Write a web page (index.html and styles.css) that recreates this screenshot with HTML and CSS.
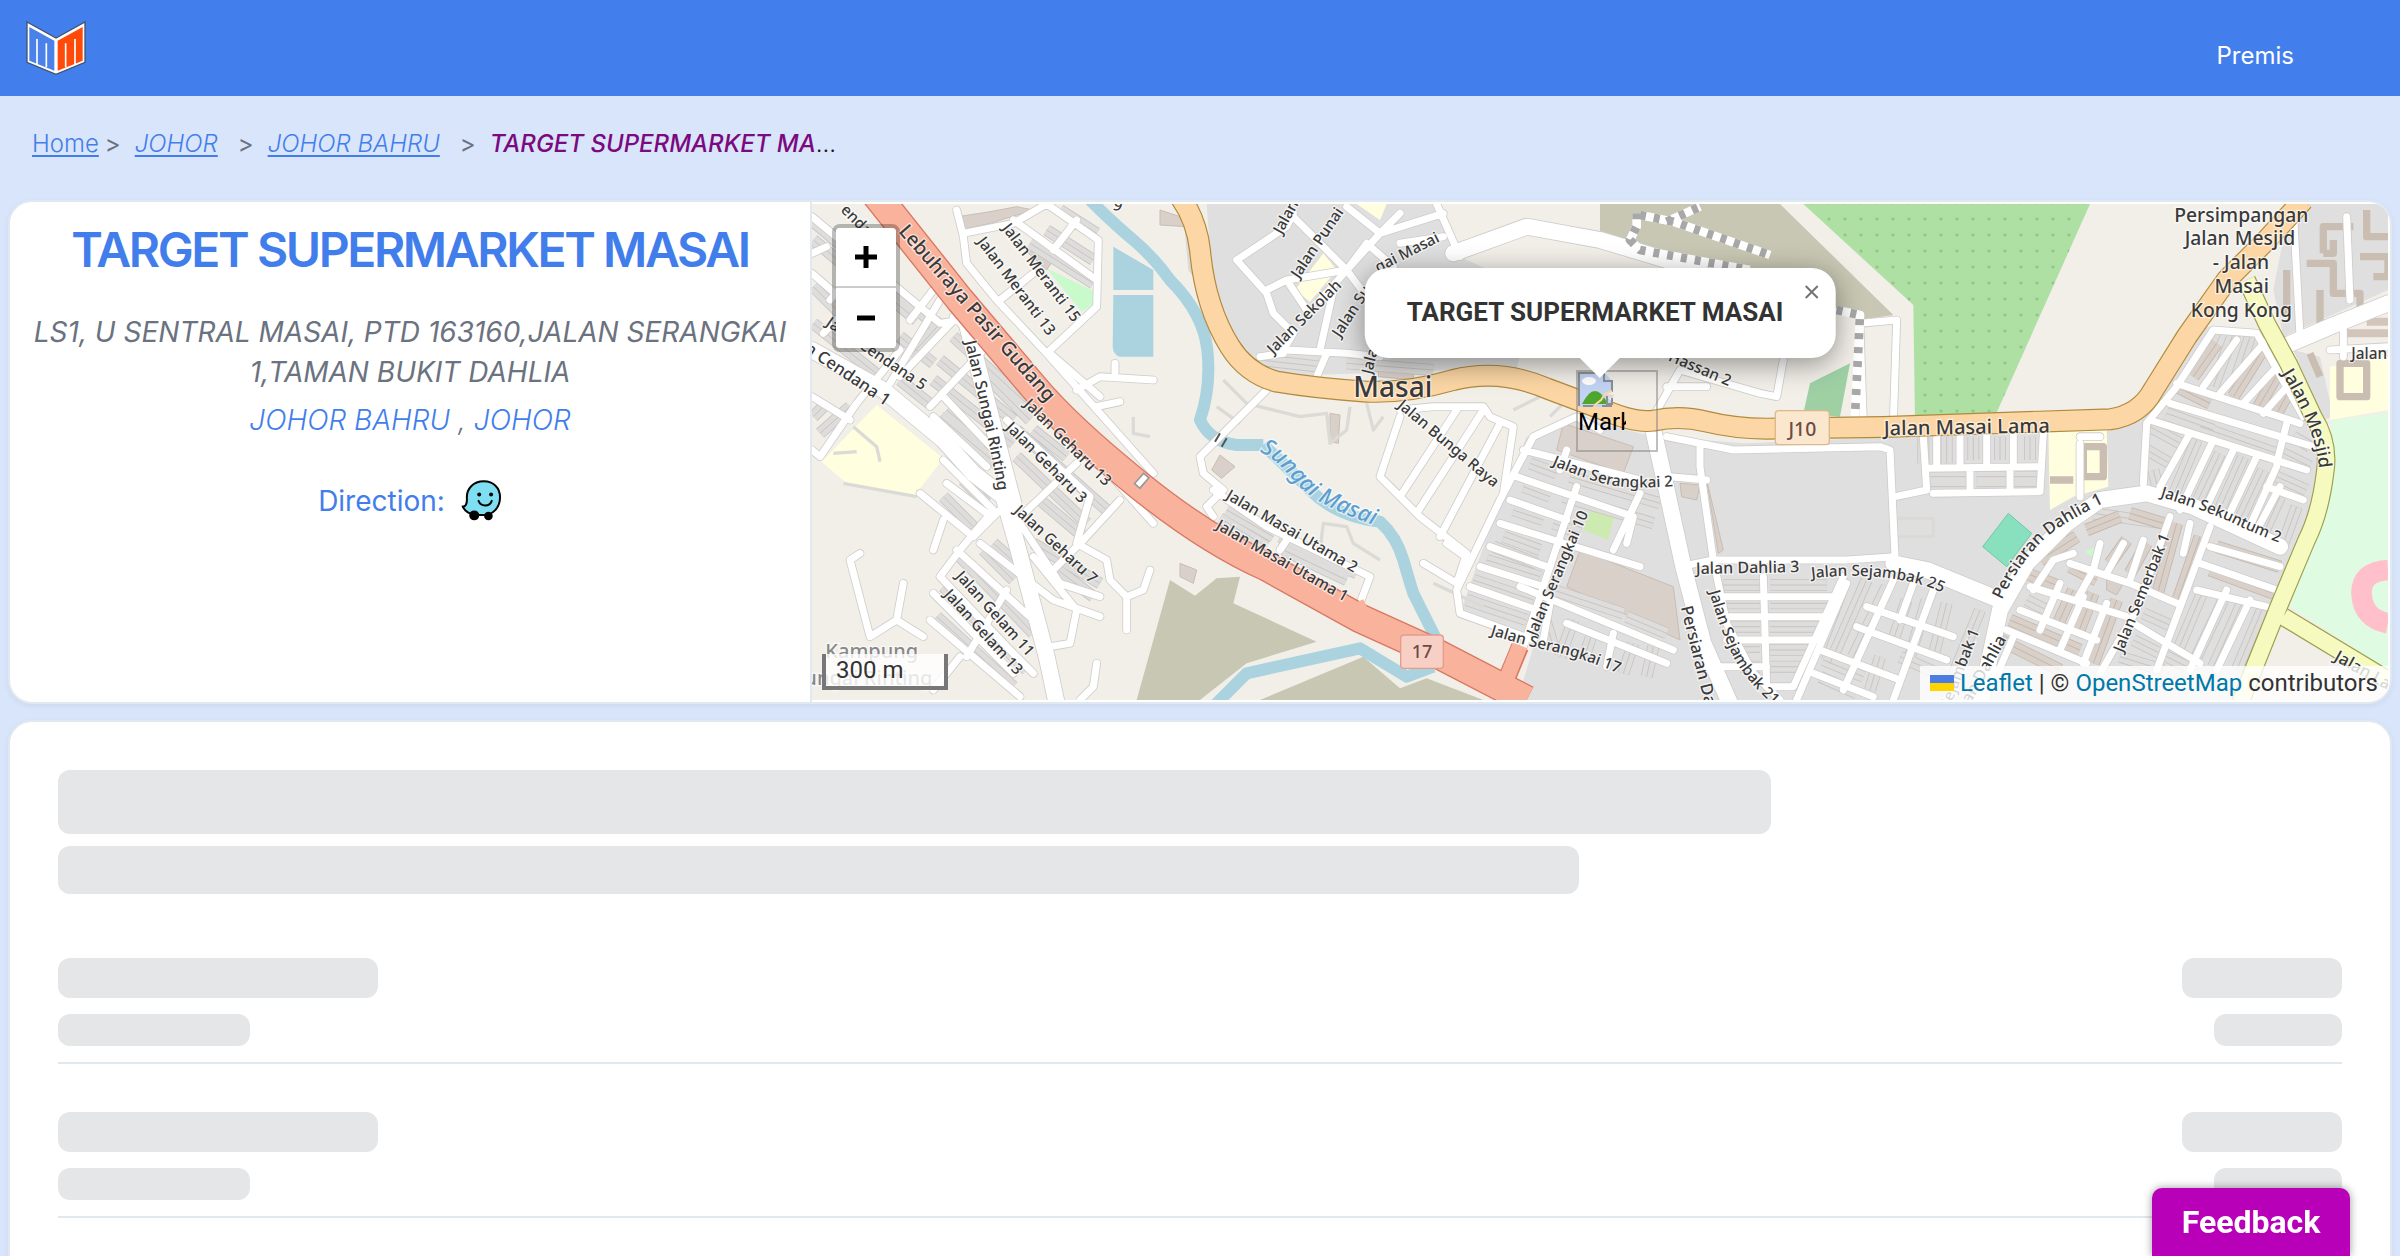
FILE: index.html
```html
<!DOCTYPE html>
<html lang="ms">
<head>
<meta charset="utf-8">
<meta name="viewport" content="width=device-width, initial-scale=1">
<title>TARGET SUPERMARKET MASAI</title>
<link rel="stylesheet" href="styles.css">
</head>
<body>
<header class="topbar">
  <a class="logo" href="#" aria-label="Home">
    <svg viewBox="48 28 180 162" width="60" height="54" aria-hidden="true">
      <path d="M51 31 138 79 225 31V152L138 188 51 152Z" fill="#fff" stroke="#44546f" stroke-width="4"/>
      <path d="M58 46 133 87V177L58 147Z" fill="#4a82ea"/>
      <path d="M143 87 218 46V147L143 177Z" fill="#ff4a0a"/>
      <path d="M81 157V82M109 167V95M167 167V95M195 157V82" fill="none" stroke="#fff" stroke-width="5"/>
    </svg>
  </a>
  <nav><a class="nav-link" href="#">Premis</a></nav>
</header>

<nav class="crumbs" aria-label="Breadcrumb">
  <a href="#">Home</a><span class="sep first">&gt;</span>
  <a href="#"><i>JOHOR</i></a><span class="sep">&gt;</span>
  <a href="#"><i>JOHOR BAHRU</i></a><span class="sep">&gt;</span>
  <span class="current"><em>TARGET SUPERMARKET MA</em>...</span>
</nav>

<main>
<section class="card premise">
  <div class="details">
    <h1>TARGET SUPERMARKET MASAI</h1>
    <address>
      <p class="street">LS1, U SENTRAL MASAI, PTD 163160,JALAN SERANGKAI 1,TAMAN BUKIT DAHLIA</p>
      <p class="area"><a href="#">JOHOR BAHRU</a> , <a href="#">JOHOR</a></p>
    </address>
    <p class="direction">Direction:
      <a href="#" aria-label="Waze">
        <svg viewBox="65 58 124 124" width="41" height="41">
          <path d="M83 116C80 84 103 62 134 62c29 0 49 20 49 48 0 32-22 54-50 54H106C88 160 76 151 70 138c9 1 13-8 13-22Z" fill="#7fdff2" stroke="#000" stroke-width="6" stroke-linejoin="round"/>
          <circle cx="105" cy="165" r="15"/><circle cx="148" cy="167" r="13"/>
          <circle cx="120" cy="102" r="6"/><circle cx="156" cy="102" r="6"/>
          <path d="M118 121c7 18 33 19 40 0" fill="none" stroke="#000" stroke-width="6" stroke-linecap="round"/>
        </svg>
      </a>
    </p>
  </div>

  <div class="map">
    <svg class="tiles" viewBox="36 42 4728 1488" preserveAspectRatio="xMidYMid slice" role="img" aria-label="Masai">
      <defs>
        <pattern id="trees" width="48" height="48" patternUnits="userSpaceOnUse" x="3062" y="62"><circle cx="25" cy="25" r="4" fill="#85c07c"/></pattern>
        <g id="rows">
          <path d="M40 95 400 400M40 150 150 240M180 250 350 390M40 290 220 470M300 440 400 520M40 400 240 560M300 570 400 650M420 510 640 690M400 570 640 760M460 440 680 640M330 500 430 390M40 680 80 640M60 730 150 650M420 680 600 830M440 660 560 760M650 720 920 960M650 800 860 1000M720 930 850 1040M560 560 690 690M700 640 960 860M700 1060 900 1180M760 1130 880 1220M580 1060 680 1150M550 1080 640 1170M480 1100 700 1330M430 1190 680 1440M410 1280 640 1490M430 920 520 1010M490 870 560 940M700 720 800 800M780 60 890 130M740 120 880 210M690 160 880 280"/>
          <path d="M1260 985 1400 1070M1280 960 1420 1040M1450 1080 1640 1170M1440 1040 1670 1150M1380 510 1560 530M1640 520 1900 540"/>
          <path d="M2190 820 2270 850M2310 860 2580 940M2170 890 2250 920M2290 920 2560 1000M2140 960 2230 990M2260 1000 2340 1030M2110 1040 2220 1080M2080 1070 2210 1120M2060 1110 2220 1160M2020 1170 2200 1230M2000 1230 2180 1290M2230 1270 2260 1370M2320 1290 2280 1400M2380 1320 2350 1410M2500 1360 2470 1450M2560 1370 2540 1460M2480 1280 2600 1330M2260 1200 2470 1270"/>
          <path d="M2770 1185 2880 1185M2910 1185 3080 1185M2770 1240 2880 1240M2910 1240 3080 1240M2780 1310 2880 1310M2910 1310 3060 1310M2800 1370 2880 1370M2910 1380 3030 1380M2820 1430 2880 1430M2910 1430 3010 1430M3200 1170 3090 1420M3130 1190 3050 1400M3260 1190 3160 1400M3320 1230 3280 1350M3380 1230 3330 1400M3440 1240 3400 1400M3240 1400 3210 1500M3070 1410 3190 1460M3060 1460 3170 1510M3300 1400 3480 1480M3540 1260 3450 1480"/>
          <path d="M3370 740V820M3440 740V820M3520 740V810M3600 740V810M3690 740V810M3380 860H3500M3380 890H3500M3530 860H3620M3530 890H3620M3640 860H3720M3640 890H3720"/>
          <path d="M4100 670 4240 720M4090 690 4410 800M4200 710 4430 790M4050 710 4140 760M4040 780 4110 820M4480 740 4530 770M4450 790 4530 830M4430 860 4520 900M4060 840 4070 880M4190 750 4110 940M4260 790 4180 960M4330 800 4250 980M4390 840 4310 1010M4440 920 4390 1030M4490 950 4450 1060M4250 420 4190 550M4300 430 4240 590M4350 440 4290 620"/>
          <path d="M4210 1200 4130 1390M4270 1230 4190 1400M4330 1230 4240 1430M4390 1250 4310 1440M4000 1350 4160 1430M3960 1400 4090 1440M3680 1230 3740 1260M4030 1270 4120 1310M3880 970 4090 1000"/>
        </g>
        <g id="shops">
          <path d="M4250 460 4180 560M4400 460 4300 620M4440 540 4370 660M4480 580 4430 670M4130 590 4230 640M3680 1150 3780 1190M3820 1200 3770 1310M3880 1210 3830 1340M3950 1230 3880 1420M3630 1290 3840 1380M3600 1350 3780 1440M3980 1050 3930 1120M4040 1060 3990 1150M4130 1000 4070 1220M4200 1040 4130 1240M4250 1070 4440 1130M4230 1140 4420 1210M3810 1130 3890 1170M3720 1110 3830 1040M3860 1020 3960 980M3990 970 4090 1000"/>
        </g>
        <g id="lanes">
          <path d="M36 80 420 400 480 390M36 250 300 480 170 640 60 800 36 780M160 340 70 430M240 160 90 330M36 190 80 170M300 560 480 370M36 620 150 690M420 330 270 580M390 650 550 480M400 300 330 390"/>
          <path d="M470 60 490 140 500 220 590 330 740 490 890 350 895 150 740 42M490 130 640 100 740 42M600 330 700 250M640 90 890 270M760 180 830 90M750 490 900 620"/>
          <path d="M830 600 900 560 1060 570M945 520V560M890 650 960 635M740 490 1060 850M460 380 700 600 830 740 1060 1000M620 690 870 920 830 1060 920 1110 930 1170 980 1220 980 1320M980 1220 1030 1200 1050 1140M830 820 640 1000M960 930 850 1050"/>
          <path d="M430 620 620 820M400 680 560 830M360 910 520 1040 610 950M430 810 580 960 480 1080 420 1160 640 1390 700 1450M470 1080 700 1290M540 1060 760 1230 900 1280M660 1000 780 1180 900 1220M700 1100 830 1260 810 1360 750 1370M400 1210 640 1450M390 1290 660 1520M440 880 560 970M430 990 400 1080M180 1090 150 1110 210 1340 290 1290 370 1340M310 1180 290 1290M480 1400 400 1500M620 1200 500 1400M850 1050 750 1150M890 1420 880 1490 840 1530"/>
          <path d="M1400 600 1200 800 1210 850 1270 900 1220 950 1240 980M1240 900 1400 1010 1710 1160 1680 1240M1440 1080 1460 1050"/>
          <path d="M1480 80 1640 240 1760 400M1480 70 1460 110 1310 210 1400 310 1420 370 1480 430 1450 480M1400 300 1460 270 1520 360M1640 240 1460 270M1380 500 1450 490M1640 50 1740 130 1560 330M1460 480 1640 490 1740 500M1580 490 1550 560M1740 130 1800 70M1700 160 1780 230M1740 130 1930 70M1640 240 1700 160M1910 42 1980 200M1930 140 1800 160M1600 300 1560 480"/>
          <path d="M1800 660 1900 650 2050 650 2070 680 2140 710 2110 910M1800 680 1740 860 1860 980 2000 1090 1970 1180 1870 1120M1970 660 1800 920M2050 660 1850 970M2100 700 1920 1040M1940 1060 2010 1110"/>
          <path d="M2400 720 2330 680 2200 740 2100 930 1970 1200 1980 1270 2200 1350M2170 780 2520 870M2150 860 2500 980 2480 1060M2130 930 2300 990M2100 1000 2260 1050 2520 1130M2070 1070 2240 1130M2040 1130 2230 1190M2010 1190 2210 1260M2300 780 2280 840M2330 890 2160 1400M2520 910 2440 1080M2160 1190 2620 1380M2250 1240 2230 1350M2300 1300 2600 1420M2440 1330 2420 1430"/>
          <path d="M2600 740 2800 780 3240 770 3270 780 3285 1100 3140 1110 2740 1110 2640 1130M2700 760 2700 830 2740 1110M2610 860 2720 870M2740 1110 2780 1300 2860 1450 2940 1530M2760 1220H3100M2770 1280H3080M2780 1350H3060M2890 1160 2900 1490 2980 1490 3130 1160M3140 1180 2990 1530M3280 1170 3130 1500M3060 1380 3300 1470M3170 1310 3440 1410M3200 1250 3460 1340M3400 1200 3280 1530M3340 1180 3300 1290M3040 1450 3220 1520M2720 1430H2900"/>
          <path d="M3285 920 3380 900 3370 740M3400 910 3720 905 3730 730M3380 835 3720 830M3410 730V830M3480 730V830M3560 730V820M3640 730V820M3510 840V900M3630 840V900"/>
          <path d="M4030 880 4040 700 4130 590 4240 420 4370 430 4510 680M4130 580 4500 700M4110 640 4540 770M4050 690 4520 840M4170 730 4080 890M4240 750 4140 960M4300 780 4210 970M4370 800 4280 990M4430 830 4340 1030M4460 700 4430 820M4440 890 4360 1040M4400 890 4510 930M4310 450 4210 590M4400 450 4260 610M4440 520 4330 640M4470 580 4390 670"/>
          <path d="M4480 60 4500 440M4640 80 4650 330M4590 480 4764 470M4630 420V500M3840 760V920M3840 740H3900"/>
          <path d="M4110 980 4010 1260 3900 1450M4230 1010 4070 1440M4170 1000 4150 1090M4230 1070 4440 1130M4200 1120 4430 1200M4190 1200 4400 1250M3820 1090 3760 1110 3700 1200M3900 1060 3880 1140 3830 1230M3690 1190 3980 1280M3660 1260 3890 1350M3620 1320 3860 1420M3780 1180 3720 1320M3850 1220 3780 1380M3920 1240 3850 1420M4000 1300 4200 1420M4280 1200 4170 1440M4350 1230 4250 1440M3810 1120 3990 1180 4130 1240M3970 1060 3920 1150M4030 1050 3990 1170M3580 1480 3640 1340"/>
        </g>
        <g id="mains">
          <path d="M36 480 250 600 430 750 520 850 610 920 650 1060 740 1400 770 1540"/>
          <path d="M500 400 640 940"/>
          <path d="M2560 720 2600 900 2650 1130 2710 1360 2790 1540"/>
          <path d="M3540 1540 3600 1260 3680 1120 3800 1000 3900 930 4040 910 4180 950 4440 1070"/>
          <path d="M3280 1120 3380 1140 3600 1230"/>
          <path d="M4450 470 4590 410 4764 340"/>
          <path d="M1960 190 2180 110 2400 150 2700 240"/>
        </g>
        <path id="river" d="M870 30Q940 100 1000 150T1110 270Q1210 370 1222 480T1200 690Q1230 755 1310 765H1390M1390 765Q1450 820 1530 900T1740 995Q1790 1040 1810 1110T1840 1210L1905 1340M1200 1590 1340 1450 1680 1375 1820 1460 1900 1430"/>
        <path id="trunk" d="M225 10 480 330 700 590Q800 710 1010 880T1400 1130L1680 1285 1900 1385 2180 1530"/>
        <path id="jten" d="M1140 20Q1190 90 1200 180 1215 350 1290 470 1340 550 1430 575 1550 595 1700 605 1820 610 1960 570 2100 535 2240 595L2400 655Q2500 700 2560 692 2640 675 2720 695 2800 715 2900 716L3250 711 3660 697 3930 688Q4020 675 4060 600L4160 440 4280 270 4400 150 4510 30"/>
        <path id="mesjid" d="M4340 270 4400 400 4465 520 4540 680Q4590 760 4575 850 4560 970 4520 1050L4440 1240 4360 1440 4320 1540M4450 1280 4764 1470"/>
        <path id="t-river" d="M1378 785C1450 815 1480 890 1550 930S1680 990 1760 1020"/>
        <path id="t-mesjid" d="M4445 550Q4500 640 4530 720T4560 880"/>
        <path id="t-sekuntum" d="M4080 920Q4240 970 4300 1000T4470 1070"/>
        <path id="t-persiaran" d="M3605 1230Q3660 1120 3720 1060T3930 930"/>
        <path id="t-sera2" d="M2255 825Q2360 870 2430 885T2660 885"/>
        <path id="t-sera17" d="M2070 1335Q2170 1365 2260 1385T2480 1460"/>
        <path id="t-sejam25" d="M3035 1165Q3160 1150 3270 1165T3440 1215"/>
        <path id="t-sejam21" d="M2728 1205Q2760 1320 2800 1400T2960 1580"/>
        <path id="t-rinting" d="M495 455Q530 600 560 730T600 960"/>
        <path id="t-utama1" d="M1245 1015 1660 1250"/>
      </defs>

      <rect x="-400" y="-400" width="5600" height="2400" fill="#f2efe9"/>
      <g fill="#e0dfdf">
        <path d="M1220 42H1900L1980 200 2200 300 2150 540H1950L1400 560 1300 470 1240 330Z"/>
        <path d="M2180 740 2330 680 2560 740 2840 760 3740 720 3920 715 4020 690 4080 600 4220 410 4390 420 4560 690 4580 850 4520 1050 4330 1540H2150L2200 1370 1980 1270 2100 930Z"/>
        <path d="M4470 42H4764V300L4450 440 4420 300ZM4480 480 4560 500 4600 680 4570 690Z"/>
      </g>
      <path d="M1110 1170 1185 1217 1250 1165 1320 1160 1300 1240 1550 1355 1340 1420 1200 1530H1010ZM1380 1530 1690 1400 1800 1495 1880 1465 2050 1530ZM2400 42H2940L3280 375 3180 390 2900 250 2400 140Z" fill="#c8c7b3"/>
      <path d="M3010 42 3340 345 3345 690 3580 690 3870 42Z" fill="#aedfa3"/>
      <path d="M3010 42 3340 345 3345 690 3580 690 3870 42Z" fill="url(#trees)"/>
      <path d="M230 645 430 805 345 915 140 880 65 815ZM1570 190 1610 240 1530 335 1485 300ZM1670 42H1760L1740 90ZM3745 720H3920L3925 890 3820 920 3750 960ZM4590 530 4764 500V660L4590 690Z" fill="#ffffdf"/>
      <path d="M740 235 885 305V340L845 365Z" fill="#c8facc"/>
      <path d="M3030 580 3150 520 3120 680 3010 670Z" fill="#9fd0a4"/>
      <path d="M2380 940 2445 965 2425 1050 2350 1020Z" fill="#cdebb0"/>
      <path d="M3855 1085 3910 1060 3890 1110Z" fill="#c8facc"/>
      <path d="M4595 690 4764 670V1440L4470 1250 4580 900Z" fill="#dffce2"/>
      <path d="M4764 1140Q4680 1145 4685 1215T4764 1300" fill="none" stroke="#ffc0cb" stroke-width="62"/>
      <path d="M3548 1070 3625 970 3695 1030 3620 1130Z" fill="#88e0be" stroke="#6fc9a5" stroke-width="3"/>
      <path d="M475 80 570 65 650 50 700 60 570 100 480 120ZM690 170 760 210 740 240 680 185ZM1080 60 1140 80 1160 110 1080 105ZM1735 530 1840 535V570L1735 560ZM1590 670 1620 675 1615 760 1590 755ZM1260 795 1305 830 1265 865 1235 840ZM2290 700 2500 770 2470 850 2270 780ZM2340 1080 2620 1190 2640 1350 2300 1190ZM2640 880 2700 885 2690 930 2645 920ZM2720 870 2770 1080 2755 1090ZM3920 1160 3970 1180 3950 1215 3920 1200ZM1140 1120 1190 1140 1180 1180 1140 1160Z" fill="#d9d0c9" stroke="#c9bdb3" stroke-width="3"/>
      <path d="M4570 190V110H4660M4570 190H4600V150M4520 220H4600V310H4680V360M4700 60V140H4764M4680 200H4764V260H4720M4560 300V400H4600M4460 240V380M4620 520H4700V620H4620ZM4530 490 4560 560M3850 770H3910V860H3850ZM3750 870H3820" fill="none" stroke="#cabdb1" stroke-width="22"/>
      <path d="M4620 430H4764M4700 395H4764" stroke="#d3c5bb" stroke-width="24"/>

      <use href="#rows" class="row-edge"/><use href="#rows" class="row-fill"/><use href="#rows" class="row-edge thin"/>
      <use href="#shops" class="shop-edge"/><use href="#shops" class="shop-fill"/><use href="#shops" class="shop-edge thin"/>

      <path d="M3080 790 3240 785Q3255 785 3258 800L3270 1085 2980 1100 2790 1090 2740 790Z" fill="#e0dfdf"/>
      <use href="#river" class="river"/>
      <path d="M940 170 1060 240V300H940ZM940 315H1060V500H960Q940 495 938 470Z" fill="#aad3df"/>

      <path class="path" d="M160 710 230 770 240 815M100 790 170 785M130 880 350 920M1270 570 1340 640 1500 680 1580 670 1590 760 1640 720 1650 650M1700 640 1720 720 1750 680M1250 650 1320 700M1560 1080 1570 1000 1640 1010 1660 1060 1740 1110M1000 680V730L1050 740M1160 130 1170 240 1240 330M3290 985H3400V1040H3290M2250 680 2330 600 2440 620M2140 660 2260 600M1900 1180 2050 1250"/>
      <use href="#lanes" class="lane-edge"/><use href="#mains" class="main-edge"/>
      <use href="#lanes" class="lane-fill"/><use href="#mains" class="main-fill"/>
      <path class="lane-edge" d="M2560 680 2640 540M2600 590 2720 590M2640 540 2880 610 2930 620 2950 510M3180 400 3290 390 3280 700M3180 410 3190 700"/>
      <path class="lane-fill" d="M2560 680 2640 540M2600 590 2720 590M2640 540 2880 610 2930 620 2950 510M3180 400 3290 390 3280 700M3180 410 3190 700"/>
      <path d="M2510 70V110L2490 150 2520 180 2850 240M2520 75 2620 95 2910 195M2600 95 2700 50M3110 360 3180 375 3165 680" class="track-edge"/>
      <path d="M2510 70V110L2490 150 2520 180 2850 240M2520 75 2620 95 2910 195M2600 95 2700 50M3110 360 3180 375 3165 680" class="track-fill"/>

      <use href="#mesjid" class="yellow-edge"/><use href="#mesjid" class="yellow-fill"/>
      <path d="M2160 1370 2110 1490" class="trunk-edge slim"/>
      <use href="#trunk" class="trunk-edge"/>
      <path d="M2160 1366 2110 1490" class="trunk-fill slim"/><path d="M1690 1228 1716 1285 1640 1250Z" fill="#f9b29c"/>
      <use href="#trunk" class="trunk-fill"/>
      <use href="#jten" class="orange-edge"/><use href="#jten" class="orange-fill"/>
      <path d="M1010 890 1040 855" stroke="#999" stroke-width="26"/><path d="M1013 886 1037 859" stroke="#fff" stroke-width="16"/>
      <path d="M1245 755 1260 730M1265 770 1280 745" stroke="#555" stroke-width="6"/>

      <g class="shield">
        <rect x="1802" y="1335" width="128" height="100" rx="10" fill="#f8cfc4" stroke="#e39c8c" stroke-width="4"/>
        <text x="1866" y="1405" font-size="54" text-anchor="middle">17</text>
        <rect x="2926" y="662" width="162" height="102" rx="10" fill="#fbe6ce" stroke="#dcb98c" stroke-width="4"/>
        <text x="3007" y="738" font-size="58" text-anchor="middle">J10</text>
      </g>

      <g class="labels" font-size="46">
        <text transform="translate(294 125) rotate(49)" font-size="58">Lebuhraya Pasir Gudang</text>
        <text transform="translate(120 62) rotate(45)">endana 9</text>
        <text transform="translate(605 115) rotate(53)">Jalan Meranti 15</text>
        <text transform="translate(530 155) rotate(53)">Jalan Meranti 13</text>
        <text transform="translate(75 405) rotate(34)">Jalan Cendana 5</text>
        <text transform="translate(-60 435) rotate(34)" font-size="50">Jalan Cendana 1</text>
        <text font-size="48"><textPath href="#t-rinting">Jalan Sungai Rinting</textPath></text>
        <text transform="translate(670 645) rotate(45)">Jalan Geharu 13</text>
        <text transform="translate(615 715) rotate(45)">Jalan Geharu 3</text>
        <text transform="translate(640 965) rotate(43)">Jalan Geharu 7</text>
        <text transform="translate(465 1160) rotate(48)">Jalan Gelam 11</text>
        <text transform="translate(430 1215) rotate(48)">Jalan Gelam 13</text>
        <text x="76" y="1404" font-size="60" class="faint">Kampung</text>
        <text x="-20" y="1486" font-size="60" class="faint">Sungai Rinting</text>
        <text x="936" y="58" font-size="46" transform="rotate(18 936 58)">9</text>
        <text transform="translate(1445 135) rotate(-61)">Jalan</text>
        <text transform="translate(1496 268) rotate(-56)">Jalan Punai</text>
        <text transform="translate(1420 495) rotate(-45)">Jalan Sekolah</text>
        <text transform="translate(1620 445) rotate(-57)">Jalan Su</text>
        <text transform="translate(1735 248) rotate(-27)">gai Masai</text>
        <text transform="translate(1715 555) rotate(-76)">Jalan</text>
        <text x="1660" y="622" font-size="84">Masai</text>
        <text transform="translate(1790 650) rotate(40)">Jalan Bunga Raya</text>
        <text class="water" font-size="68"><textPath href="#t-river">Sungai Masai</textPath></text>
        <text transform="translate(1275 925) rotate(30)">Jalan Masai Utama 2</text>
        <text><textPath href="#t-utama1">Jalan Masai Utama 1</textPath></text>
        <text><textPath href="#t-sera2">Jalan Serangkai 2</textPath></text>
        <text transform="translate(2208 1340) rotate(-67)">Jalan Serangkai 10</text>
        <text><textPath href="#t-sera17">Jalan Serangkai 17</textPath></text>
        <text transform="translate(2530 480) rotate(23)">Jln. Hassan 2</text>
        <text transform="translate(3252 736) rotate(-1)" font-size="60">Jalan Masai Lama</text>
        <text x="2688" y="1152" font-size="48" transform="rotate(-1 2688 1152)">Jalan Dahlia 3</text>
        <text><textPath href="#t-sejam25">Jalan Sejambak 25</textPath></text>
        <text><textPath href="#t-sejam21">Jalan Sejambak 21</textPath></text>
        <text transform="translate(2642 1252) rotate(76)" font-size="50">Persiaran Dahlia</text>
        <text font-size="50"><textPath href="#t-persiaran">Persiaran Dahlia 1</textPath></text>
        <text transform="translate(3405 1670) rotate(-69)">Jalan Sejambak 1</text>
        <text transform="translate(3430 1690) rotate(-61)" font-size="50">Persiaran Dahlia</text>
        <text transform="translate(3968 1390) rotate(-68)">Jalan Semerbak 1</text>
        <text><textPath href="#t-sekuntum">Jalan Sekuntum 2</textPath></text>
        <text font-size="54"><textPath href="#t-mesjid">Jalan Mesjid</textPath></text>
        <text x="4654" y="506">Jalan Mesjid</text>
        <text transform="translate(4600 1410) rotate(29)" font-size="50">Jalan Lama</text>
        <g font-size="58" text-anchor="middle">
          <text x="4324" y="95">Persimpangan</text>
          <text x="4320" y="166">Jalan Mesjid</text>
          <text x="4323" y="238">- Jalan</text>
          <text x="4325" y="309">Masai</text>
          <text x="4324" y="381">Kong Kong</text>
        </g>
      </g>
    </svg>

    <div class="marker" role="img" aria-label="Marker">
      <svg viewBox="0 0 36 36" width="36" height="36" aria-hidden="true">
        <path d="M1 1H27L34 9V18L28 23 34 30V35H1Z" fill="#c3d3f4"/>
        <ellipse cx="11" cy="9" rx="7" ry="4" fill="#fff"/>
        <path d="M4 32Q17 6 30 32Z" fill="#4ea72c"/>
        <path d="M1 34V1H26V9H34V20M29 24V32H34V26M24 34H34M5 34H16" fill="none" stroke="#8a8f94" stroke-width="2"/>
        <path d="M34 19 27 22 23 28 18 32 15 36" fill="none" stroke="#fcd6a4" stroke-width="2"/>
      </svg>
      <span>Mark</span>
    </div>

    <div class="popup">
      <strong>TARGET SUPERMARKET MASAI</strong>
      <button class="close" type="button" aria-label="Close popup"><svg viewBox="0 0 14 14" width="14" height="14"><path d="M1 1 13 13M13 1 1 13" stroke="#757575" stroke-width="2"/></svg></button>
    </div>

    <div class="zoom">
      <button type="button" aria-label="Zoom in"><svg viewBox="0 0 22 22" width="22" height="22"><path d="M11 0V22M0 11H22" stroke="#000" stroke-width="5"/></svg></button>
      <button type="button" aria-label="Zoom out"><svg viewBox="0 0 22 22" width="22" height="22"><path d="M2 11H20" stroke="#000" stroke-width="5"/></svg></button>
    </div>
    <div class="scale">300 m</div>
    <div class="credit">
      <svg viewBox="0 0 24 16" width="24" height="16" aria-hidden="true"><path fill="#4c7be1" d="M0 0h24v8H0z"/><path fill="#ffd500" d="M0 8h24v8H0z"/></svg>
      <span><a href="#">Leaflet</a> | © <a href="#">OpenStreetMap</a> contributors</span>
    </div>
  </div>
</section>

<section class="card loading" aria-busy="true">
  <div class="bone heading"></div>
  <div class="bone subheading"></div>
  <ul>
    <li><div class="bone name"></div><div class="bone price"></div><div class="bone unit"></div><div class="bone date"></div></li>
    <li><div class="bone name"></div><div class="bone price"></div><div class="bone unit"></div><div class="bone date"></div></li>
    <li><div class="bone name"></div><div class="bone price"></div><div class="bone unit"></div><div class="bone date"></div></li>
  </ul>
</section>
</main>
<button class="feedback" type="button">Feedback</button>
</body>
</html>
```
FILE: styles.css
```css
* { box-sizing: border-box; }

body {
  margin: 0;
  background: #d9e5fb;
  color: #111827;
  font: 24px/32px Inter, "Liberation Sans", sans-serif;
}

h1, p, ul { margin: 0; padding: 0; }
a { color: #427eeb; text-decoration: none; }
button { font: inherit; border: 0; padding: 0; cursor: pointer; }
svg { display: block; }

.topbar {
  display: flex;
  justify-content: space-between;
  align-items: center;
  height: 96px;
  padding: 0 106px 0 26px;
  background: #427eec;
}
.nav-link { display: block; padding-top: 16px; color: #fff; }

.crumbs {
  display: flex;
  align-items: center;
  height: 96px;
  padding: 0 32px;
  font-weight: 300;
}
.crumbs a { text-decoration: underline; text-decoration-thickness: 2px; text-underline-offset: 3px; }
.sep { margin: 0 14px 0 20px; color: #6b7280; font-weight: 400; }
.sep.first { margin-left: 6px; }
.current em { color: #7a0a7e; font-weight: 500; }

main { display: flex; flex-direction: column; gap: 16px; padding: 8px; }

.card {
  background: #fff;
  border: 2px solid #e0e8f0;
  border-radius: 24px;
  box-shadow: 0 2px 6px rgba(0, 0, 0, .06);
}

.premise { display: grid; grid-template-columns: 401fr 789fr; overflow: hidden; }
.details {
  padding: 18px 20px;
  border-right: 2px solid #e0e8f0;
  text-align: center;
  font-size: 28px;
  line-height: 40px;
}
.details h1 { color: #427eeb; font-size: 48px; line-height: 60px; font-weight: 600; letter-spacing: -0.05em; }
address { margin-top: 32px; color: #6b7280; font-weight: 300; }
.street { font-weight: 400; }
.area { margin-top: 8px; }
.direction {
  display: flex;
  justify-content: center;
  align-items: center;
  gap: 16px;
  margin-top: 40px;
  color: #427eeb;
}

.map { position: relative; min-height: 496px; margin: 2px 2px 2px 0; overflow: hidden; font: 24px/34px Roboto, "Liberation Sans", sans-serif; }
.tiles { position: absolute; inset: 0; width: 100%; height: 100%; }
.tiles path { stroke-linejoin: round; }

.row-edge, .row-fill, .shop-edge, .shop-fill { fill: none; }
.row-edge { stroke: #c6c5c4; stroke-width: 36px; }
.row-fill { stroke: #dedddb; stroke-width: 31px; }
.shop-edge { stroke: #c4b6aa; stroke-width: 38px; }
.shop-fill { stroke: #d9d0c9; stroke-width: 33px; }
.row-edge.thin, .shop-edge.thin { stroke-width: 3px; }
.river { fill: none; stroke: #aad3df; stroke-width: 36px; }
.path { fill: none; stroke: #dcdad7; stroke-width: 10px; }
.lane-edge, .lane-fill, .main-edge, .main-fill { fill: none; stroke-linecap: round; }
.lane-edge { stroke: #cfcdcb; stroke-width: 26px; }
.lane-fill { stroke: #fff; stroke-width: 21px; }
.main-edge { stroke: #cfcdcb; stroke-width: 53px; }
.main-fill { stroke: #fff; stroke-width: 48px; }
.track-edge { fill: none; stroke: #fff; stroke-width: 26px; }
.track-fill { fill: none; stroke: #a8a8a8; stroke-width: 26px; stroke-dasharray: 18px 24px; }
.trunk-edge, .trunk-fill, .orange-edge, .orange-fill, .yellow-edge, .yellow-fill { fill: none; }
.trunk-edge { stroke: #d97762; stroke-width: 90px; }
.trunk-fill { stroke: #f9b29c; stroke-width: 82px; }
.trunk-edge.slim { stroke-width: 54px; }
.trunk-fill.slim { stroke-width: 46px; }
.orange-edge { stroke: #b08a3c; stroke-width: 66px; }
.orange-fill { stroke: #fcd6a4; stroke-width: 59px; }
.yellow-edge { stroke: #9c9f50; stroke-width: 56px; }
.yellow-fill { stroke: #f7fabf; stroke-width: 49px; }
.labels, .shield { font-family: "Noto Sans", sans-serif; font-weight: 500; }
.labels { fill: #3a3a3a; stroke: rgba(255, 255, 255, .6); stroke-width: 8px; paint-order: stroke; }
.shield { fill: #6b4b45; }
.faint { fill: #888; }
.water { fill: #5d9fd0; font-style: italic; }

.marker {
  position: absolute;
  top: 166px;
  left: calc(50% - 24px);
  width: 82px;
  height: 82px;
  border: 2px solid rgba(128, 128, 128, .5);
  color: #000;
}
.marker span { display: block; width: 48px; overflow: hidden; line-height: 28px; }

.popup {
  position: absolute;
  top: 64px;
  left: 50%;
  transform: translateX(-50%);
  padding: 26px 52px 28px 42px;
  border-radius: 24px;
  background: #fff;
  color: #333;
  font-size: 26px;
  line-height: 36px;
  white-space: nowrap;
  box-shadow: 0 6px 28px rgba(0, 0, 0, .4);
}
.popup::after {
  content: "";
  position: absolute;
  top: 100%;
  left: 50%;
  margin-left: -20px;
  border: 20px solid transparent;
  border-top-color: #fff;
  border-bottom: 0;
}
.close { position: absolute; top: 0; right: 0; width: 48px; height: 48px; background: none; display: grid; place-items: center; }

.zoom {
  position: absolute;
  top: 20px;
  left: 20px;
  border: 4px solid rgba(0, 0, 0, .25);
  border-radius: 8px;
  background-clip: padding-box;
}
.zoom button { display: grid; place-items: center; width: 60px; height: 60px; background: #fff; }
.zoom button:first-child { border-bottom: 2px solid #ccc; border-radius: 4px 4px 0 0; }
.zoom button:last-child { border-radius: 0 0 4px 4px; }

.scale {
  position: absolute;
  left: 10px;
  bottom: 10px;
  width: 126px;
  height: 36px;
  padding-left: 10px;
  border: 4px solid #777;
  border-top: 0;
  background: rgba(255, 255, 255, .8);
  color: #333;
  line-height: 32px;
}
.credit {
  position: absolute;
  right: 0;
  bottom: 0;
  display: flex;
  align-items: center;
  gap: 6px;
  padding: 0 10px;
  background: rgba(255, 255, 255, .8);
  color: #333;
  white-space: nowrap;
}
.credit a { color: #0078a8; }

.loading { padding: 48px 48px 80px; }
.bone { border-radius: 12px; background: #e5e6e8; }
.heading { width: 75%; height: 64px; }
.subheading { width: 66.6%; height: 48px; margin: 12px 0 16px; }
.loading li {
  display: grid;
  grid-template-columns: auto auto;
  justify-content: space-between;
  row-gap: 16px;
  padding: 48px 0 16px;
  border-bottom: 2px solid #e2e8f0;
}
.name { width: 320px; height: 40px; }
.price { width: 160px; height: 40px; }
.unit { width: 192px; height: 32px; }
.date { width: 128px; height: 32px; justify-self: end; }

.feedback {
  position: fixed;
  right: 50px;
  bottom: 0;
  width: 198px;
  height: 68px;
  border-radius: 10px 10px 0 0;
  background: #b800b8;
  color: #fff;
  font: 700 32px/68px Roboto, "Liberation Sans", sans-serif;
  box-shadow: 0 0 8px rgba(0, 0, 0, .4);
}
```
